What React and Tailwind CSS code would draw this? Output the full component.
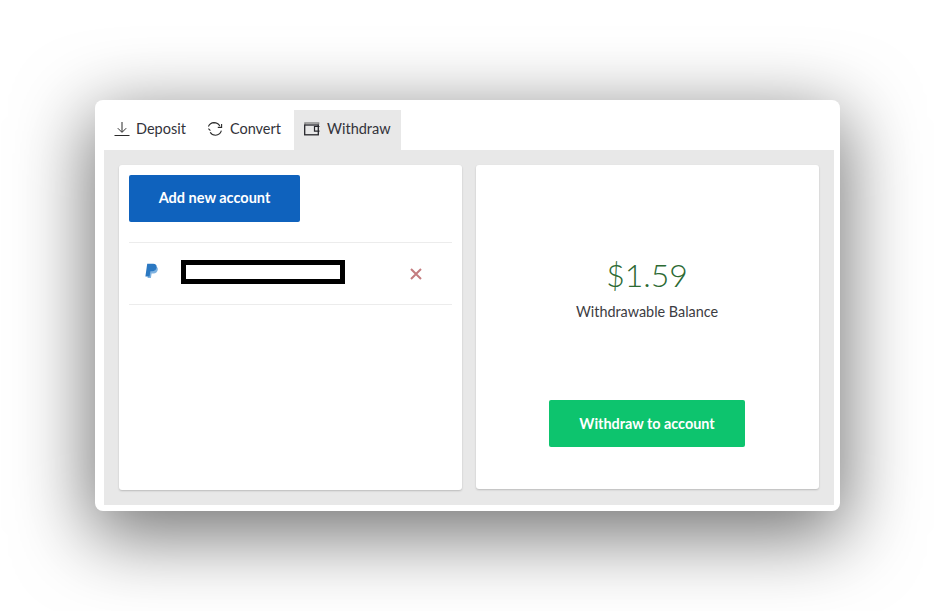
import React from 'react';

// Tab icons are drawn by hand, none of the packages has the same strokes
const DepositIcon = () => (
  <svg width="16" height="16" viewBox="0 0 16 16" fill="none" stroke="#2b2b2b" strokeWidth="1">
    <path d="M8 1v10M3.8 7.2 8 11.4l4.2-4.2M0.5 14.5h15" />
  </svg>
);

const ConvertIcon = () => (
  <svg width="16" height="16" viewBox="0 0 16 16" fill="none" stroke="#2b2b2b" strokeWidth="1.1">
    <path d="M1.4 5.5A6.4 6.4 0 0 1 7 1.6c2.6 0 4.6 1.2 5.8 3.4M14.6 3v3.4h-3.8" />
    <path d="M1.4 7.6l2 2M14.4 9.6A6.4 6.4 0 0 1 8.6 14.2c-2.4 0-4.4-1.2-5.4-3" />
  </svg>
);

const WalletIcon = () => (
  <svg width="16" height="14" viewBox="0 0 16 14" fill="none">
    <path d="M1 2.5V1h13.5v1.5" stroke="#8a8a8a" strokeWidth="1.6" />
    <rect x="0.7" y="3" width="13.6" height="9.8" stroke="#26262b" strokeWidth="1.3" />
    <path d="M15.5 4.5h-5v4.6h5" stroke="#26262b" strokeWidth="1.2" />
  </svg>
);

const PaypalIcon = () => (
  <svg width="14" height="16" viewBox="0 0 14 16">
    <path d="M3.4 3.2h6c2.4 0 3.8 1.3 3.4 3.6-.4 2.4-2 3.6-4.3 3.6H6.6L5.9 15H2.6z" fill="#7fb2e0" />
    <path d="M2.2.8h5.9c2.5 0 3.9 1.3 3.5 3.6-.4 2.5-2.2 3.8-4.5 3.8H5.4l-.8 5.2H.4z" fill="#2b78c2" />
  </svg>
);

const Tab = ({ icon, label, active, spacing }) => (
  <div className={`flex h-10 items-center pb-[2px] pl-[10px] text-[14.5px] text-[#33333a] ${spacing} ${active ? 'bg-[#e8e8e8]' : ''}`}>
    {icon}
    <span>{label}</span>
  </div>
);

const App = () => {
  return (
    <div className="h-[611px] w-[935px] overflow-hidden bg-white pt-[100px] font-['Lato',sans-serif]">
      <div className="mx-auto flex h-[411px] w-[745px] flex-col rounded-[8px] bg-white pb-[6px] pl-[9px] pr-[6px] pt-[10px] shadow-[0_20px_75px_5px_rgba(0,0,0,0.55)]">
        <div className="flex h-10 gap-[3px]">
          <Tab icon={<DepositIcon />} label="Deposit" spacing="gap-[6px] pr-[8px]" />
          <Tab icon={<ConvertIcon />} label="Convert" spacing="gap-[7px] pr-[10px]" />
          <Tab icon={<WalletIcon />} label="Withdraw" spacing="gap-[7px] pr-[10px]" active />
        </div>

        <div className="grid flex-1 grid-cols-2 gap-[14px] bg-[#e8e8e8] p-[15px]">
          <div className="rounded-[3px] bg-white px-[10px] pt-[10px] shadow-[0_1px_2px_rgba(0,0,0,0.2)]">
            <button type="button" className="h-[47px] w-[171px] rounded-[2px] bg-[#0f62bd] pb-[2px] text-[14.5px] font-bold text-white">
              Add new account
            </button>
            <div className="mt-5 flex h-[63px] items-center border-y border-[#ececec] pl-[16px] pr-[30px]">
              <div className="mb-[6px] w-[36px]">
                <PaypalIcon />
              </div>
              <div className="mb-1 h-6 w-[164px] border-[5px] border-black" />
              <span className="ml-auto text-[#c47c7f]">
                <svg width="12" height="12" viewBox="0 0 12 12" stroke="currentColor" strokeWidth="2">
                  <path d="M1 1l10 10M11 1 1 11" />
                </svg>
              </span>
            </div>
          </div>

          <div className="flex h-[324px] flex-col items-center rounded-[3px] bg-white pr-[1px] shadow-[0_1px_2px_rgba(0,0,0,0.2)]">
            <div className="mt-[87px] text-[32px] font-light leading-[46px] text-[#2c6a33]">$1.59</div>
            <div className="mt-[4px] text-[14.4px] leading-5 text-[#3c3c42]">Withdrawable Balance</div>
            <button type="button" className="mt-[78px] h-[47px] w-[196px] rounded-[2px] bg-[#0dc46e] text-[14.4px] font-bold text-white">
              Withdraw to account
            </button>
          </div>
        </div>
      </div>
    </div>
  );
};

export default App;
